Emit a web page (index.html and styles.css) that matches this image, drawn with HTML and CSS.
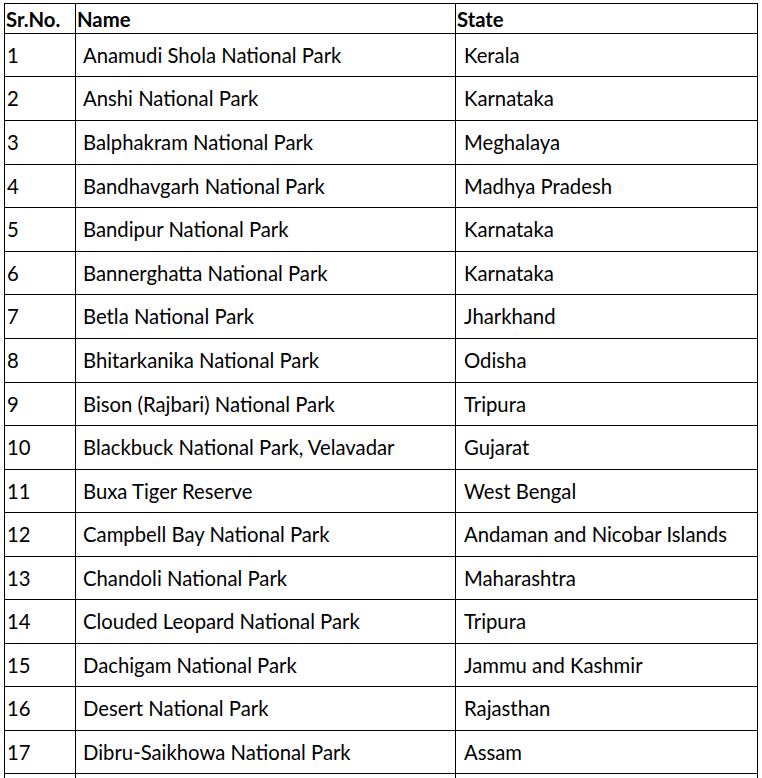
FILE: index.html
```html
<!DOCTYPE html>
<html>
<head>
<meta charset="utf-8">
<link rel="stylesheet" href="styles.css">
</head>
<body>
<div class="wrap">
<table class="parks">
<colgroup><col class="c1"><col class="c2"><col class="c3"></colgroup>
<thead>
<tr class="head"><th>Sr.No.</th><th>Name</th><th>State</th></tr>
</thead>
<tbody>
<tr class="r43"><td class="num">1</td><td class="name">Anamudi Shola National Park</td><td class="state">Kerala</td></tr>
<tr class="r44"><td class="num">2</td><td class="name">Anshi National Park</td><td class="state">Karnataka</td></tr>
<tr class="r44"><td class="num">3</td><td class="name">Balphakram National Park</td><td class="state">Meghalaya</td></tr>
<tr class="r43"><td class="num">4</td><td class="name">Bandhavgarh National Park</td><td class="state">Madhya Pradesh</td></tr>
<tr class="r44"><td class="num">5</td><td class="name">Bandipur National Park</td><td class="state">Karnataka</td></tr>
<tr class="r43"><td class="num">6</td><td class="name">Bannerghatta National Park</td><td class="state">Karnataka</td></tr>
<tr class="r44"><td class="num">7</td><td class="name">Betla National Park</td><td class="state">Jharkhand</td></tr>
<tr class="r44"><td class="num">8</td><td class="name">Bhitarkanika National Park</td><td class="state">Odisha</td></tr>
<tr class="r43"><td class="num">9</td><td class="name">Bison (Rajbari) National Park</td><td class="state">Tripura</td></tr>
<tr class="r44"><td class="num">10</td><td class="name">Blackbuck National Park, Velavadar</td><td class="state">Gujarat</td></tr>
<tr class="r43"><td class="num">11</td><td class="name">Buxa Tiger Reserve</td><td class="state">West Bengal</td></tr>
<tr class="r44"><td class="num">12</td><td class="name">Campbell Bay National Park</td><td class="state">Andaman and Nicobar Islands</td></tr>
<tr class="r43"><td class="num">13</td><td class="name">Chandoli National Park</td><td class="state">Maharashtra</td></tr>
<tr class="r44"><td class="num">14</td><td class="name">Clouded Leopard National Park</td><td class="state">Tripura</td></tr>
<tr class="r43"><td class="num">15</td><td class="name">Dachigam National Park</td><td class="state">Jammu and Kashmir</td></tr>
<tr class="r44"><td class="num">16</td><td class="name">Desert National Park</td><td class="state">Rajasthan</td></tr>
<tr class="r43"><td class="num">17</td><td class="name">Dibru-Saikhowa National Park</td><td class="state">Assam</td></tr>
<tr class="tail"><td></td><td></td><td></td></tr>
</tbody>
</table>
</div>
</body>
</html>
```

FILE: styles.css
```css
html, body {
  margin: 0;
  padding: 0;
  background: #ffffff;
}

body {
  font-family: Lato, "Liberation Sans", sans-serif;
  color: #000000;
  overflow: hidden;
  height: 778px;
}

.wrap {
  padding: 3px 0 0 4px;
  height: 775px;
  overflow: hidden;
}

.parks {
  border-collapse: collapse;
  table-layout: fixed;
  width: 753px;
  font-size: 20.3px;
  line-height: 1.2;
}

.c1 { width: 71px; }
.c2 { width: 380px; }
.c3 { width: 302px; }

.parks th,
.parks td {
  border: 1px solid #000000;
  padding: 0;
  vertical-align: middle;
  white-space: nowrap;
  overflow: hidden;
}

.parks th {
  text-align: left;
  font-weight: 700;
  padding: 1px 0 0 1px;
}

.head { height: 30px; }
.r43 { height: 43px; }
.r44 { height: 44px; }
.tail { height: 20px; }

.num { padding-left: 2px !important; }
.name { padding-left: 7px !important; }
.state { padding-left: 8px !important; }
```
